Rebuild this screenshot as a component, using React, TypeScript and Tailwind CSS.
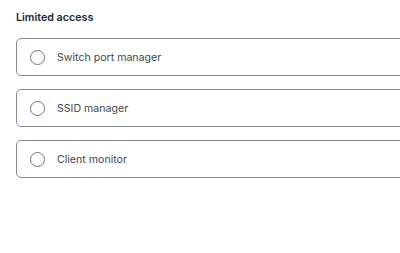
import React from "react";

const items = ["Switch port manager", "SSID manager", "Client monitor"];

export default function App() {
  return (
    <div className="w-[400px] h-[253px] overflow-hidden bg-white" style={{ fontFamily: "Inter, 'Liberation Sans', sans-serif" }}>
      <div className="pl-4 pt-[11px]">
        <div className="text-[10.7px] leading-[14px] font-semibold text-[#1f2733]">Limited access</div>
        <div className="mt-[13px] flex flex-col gap-[13px]">
          {items.map((t) => (
            <div
              key={t}
              className="w-[420px] h-[38px] shrink-0 rounded-[5px] border border-[#838b95] flex items-center pl-[13px]"
            >
              <div className="w-[15px] h-[15px] rounded-full border border-[#6f7680] shrink-0" />
              <span className="ml-[12px] pt-[2px] text-[10.6px] text-[#41474f]">{t}</span>
            </div>
          ))}
        </div>
      </div>
    </div>
  );
}
